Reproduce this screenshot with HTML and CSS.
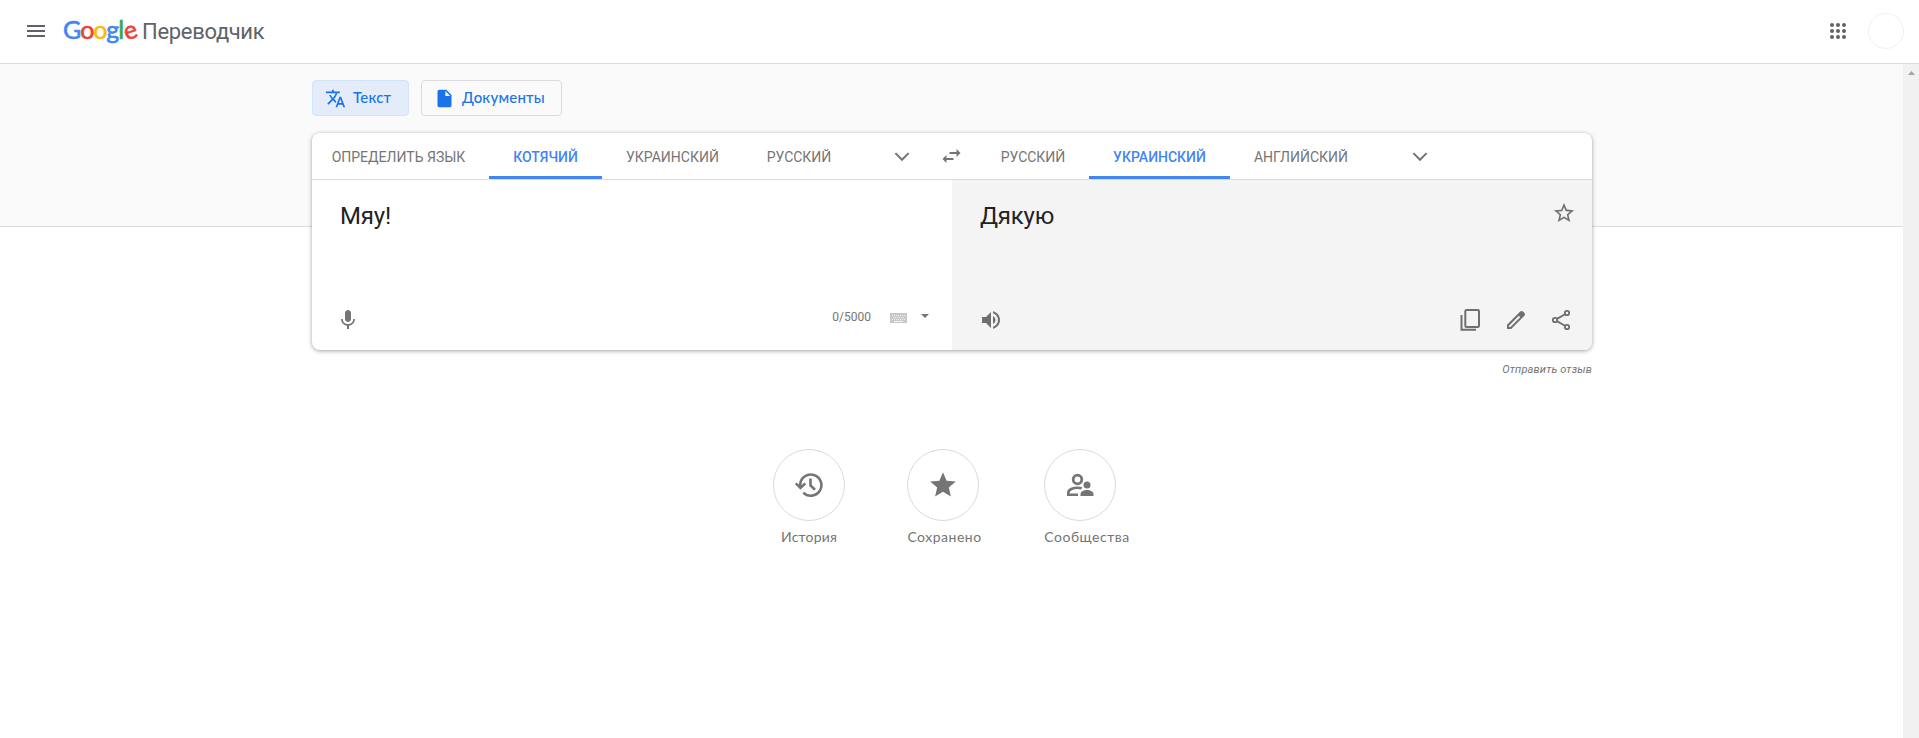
FILE: index.html
```html
<!DOCTYPE html>
<html lang="ru">
<head>
<meta charset="utf-8">
<title>Google Переводчик</title>
<link rel="stylesheet" href="styles.css">
</head>
<body>
<header class="header">
  <svg class="menu" viewBox="0 0 24 24"><path d="M3 18h18v-2H3v2zm0-5h18v-2H3v2zm0-7v2h18V6H3z"/></svg>
  <div class="brand"><span class="logo"><span class="blue">G</span><span class="red">o</span><span class="yellow">o</span><span class="blue">g</span><span class="green">l</span><span class="red tilt">e</span></span><span class="product">Переводчик</span></div>
  <svg class="apps" viewBox="0 0 16 16"><circle cx="2" cy="2" r="2"/><circle cx="8" cy="2" r="2"/><circle cx="14" cy="2" r="2"/><circle cx="2" cy="8" r="2"/><circle cx="8" cy="8" r="2"/><circle cx="14" cy="8" r="2"/><circle cx="2" cy="14" r="2"/><circle cx="8" cy="14" r="2"/><circle cx="14" cy="14" r="2"/></svg>
  <div class="avatar"></div>
</header>
<div class="viewport">
  <div class="page">
    <main class="content">
      <nav class="modes">
        <button class="mode mode-text active"><svg viewBox="0 0 24 24"><path d="M12.87 15.07l-2.54-2.51.03-.03c1.74-1.94 2.98-4.17 3.71-6.53H17V4h-7V2H8v2H1v1.99h11.17C11.5 7.92 10.44 9.75 9 11.35 8.07 10.32 7.3 9.19 6.69 8h-2c.73 1.63 1.73 3.17 2.98 4.56l-5.09 5.02L4 19l5-5 3.11 3.11.76-2.04zM18.5 10h-2L12 22h2l1.12-3h4.75L21 22h2l-4.5-12zm-2.62 7l1.62-4.33L19.12 17h-3.24z"/></svg><span class="t-text">Текст</span></button>
        <button class="mode mode-docs"><svg viewBox="0 0 24 24"><path d="M6 2c-1.1 0-1.99.9-1.99 2L4 20c0 1.1.89 2 1.99 2H18c1.1 0 2-.9 2-2V8l-6-6H6zm7 7V3.5L18.5 9H13z"/></svg><span class="t-docs">Документы</span></button>
      </nav>
      <section class="card">
        <div class="langs">
          <div class="source-langs">
            <span class="tab detect">ОПРЕДЕЛИТЬ ЯЗЫК</span><span class="tab cat selected">КОТЯЧИЙ</span><span class="tab ukr">УКРАИНСКИЙ</span><span class="tab rus">РУССКИЙ</span>
            <svg class="chevron" viewBox="0 0 24 24"><path d="M5.4 9.1 12 15.8l6.6-6.7"/></svg>
          </div>
          <svg class="swap" viewBox="0 0 24 24"><path d="M6.99 11L3 15l3.99 4v-3H14v-2H6.99v-3zM21 9l-3.99-4v3H10v2h7.01v3L21 9z"/></svg>
          <div class="target-langs">
            <span class="tab rus2">РУССКИЙ</span><span class="tab ukr selected">УКРАИНСКИЙ</span><span class="tab eng">АНГЛИЙСКИЙ</span>
            <svg class="chevron" viewBox="0 0 24 24"><path d="M5.4 9.1 12 15.8l6.6-6.7"/></svg>
          </div>
        </div>
        <div class="panes">
          <div class="pane source">
            <div class="row"><p class="phrase meow">Мяу!</p></div>
            <div class="tools">
              <svg class="icon" viewBox="0 0 24 24"><path d="M12 14c1.66 0 2.99-1.34 2.99-3L15 5c0-1.66-1.34-3-3-3S9 3.34 9 5v6c0 1.66 1.34 3 3 3zm5.3-3c0 3-2.54 5.1-5.3 5.1S6.7 14 6.7 11H5c0 3.41 2.72 6.23 6 6.72V21h2v-3.28c3.28-.48 6-3.3 6-6.72h-1.7z"/></svg>
              <span class="count">0/5000</span>
              <svg class="keyboard" viewBox="0 0 17 10"><path fill="#c8c8c8" d="M0 0h17v10H0z"/><path stroke="#fff" stroke-opacity=".75" stroke-dasharray="1 1" d="M2 2.5h14M3 4.5h12M2 6.5h14"/><path stroke="#fff" stroke-opacity=".8" d="M4 8.500h9"/></svg>
              <svg class="caret" viewBox="0 0 8 4"><path d="M0 0h8L4 4z"/></svg>
            </div>
          </div>
          <div class="pane target">
            <div class="row"><p class="phrase thanks">Дякую</p>
              <svg class="icon star" viewBox="0 0 24 24"><path d="M22 9.24l-7.19-.62L12 2 9.19 8.63 2 9.24l5.46 4.73L5.82 21 12 17.27 18.18 21l-1.63-7.03L22 9.24zM12 15.4l-3.76 2.27 1-4.28-3.32-2.88 4.38-.38L12 6.1l1.71 4.04 4.38.38-3.32 2.88 1 4.28L12 15.4z"/></svg></div>
            <div class="tools">
              <svg class="icon speaker" viewBox="0 0 24 24"><path d="M3 9v6h4l5 5V4L7 9H3zm13.5 3c0-1.77-1.02-3.29-2.5-4.03v8.05c1.48-.73 2.5-2.25 2.5-4.02zM14 3.23v2.06c2.89.86 5 3.54 5 6.71s-2.11 5.85-5 6.71v2.06c4.01-.91 7-4.49 7-8.77s-2.99-7.86-7-8.77z"/></svg>
              <svg class="icon" viewBox="0 0 24 24"><path fill="none" stroke="#6f6f6f" stroke-width="2" d="M7.500 2h11.300q1.200 0 1.200 1.200v14.600q0 1.200-1.200 1.200H7.500q-1.200 0-1.200-1.200V3.200Q6.300 2 7.500 2zM2.500 7v14.800H17" /></svg>
              <svg class="icon" viewBox="0 0 24 24"><path d="M20.410 4.940l-1.350-1.350c-.780-.780-2.050-.780-2.830 0L3 16.820V21h4.180L20.410 7.770c.790-.780.790-2.050 0-2.830zM6.410 19.060L5 19v-1.360l9.820-9.820 1.410 1.410-9.820 9.830z"/></svg>
              <svg class="icon" viewBox="0 0 24 24"><g fill="none" stroke="#6f6f6f" stroke-width="1.800"><circle cx="18" cy="5" r="2.200"/><circle cx="6" cy="12" r="2.200"/><circle cx="18" cy="19" r="2.200"/><path d="m8 10.900 8-4.700M8 13.100l8 4.700"/></g></svg>
            </div>
          </div>
        </div>
      </section>
      <div class="feedback"><span>Отправить отзыв</span></div>
      <div class="shortcuts">
        <div class="shortcut"><div class="disc"><svg viewBox="0 0 28 28"><path fill="none" stroke="#757575" stroke-width="2.600" d="M5.200 15V13.800A10.600 10.600 0 1 1 8.300 21.600M.8 12.300l4.700 4.700 4.700-4.700M15.500 7.500v7l4.500 4.200"/></svg></div><span class="l1">История</span></div>
        <div class="shortcut saved"><div class="disc"><svg viewBox="0 0 24 24"><path d="M12 17.270L18.180 21l-1.640-7.030L22 9.240l-7.190-.61L12 2 9.190 8.630 2 9.240l5.460 4.730L5.820 21z" transform="translate(-1.200 -1.150) scale(1.100)"/></svg></div><span class="l2">Сохранено</span></div>
        <div class="shortcut community"><div class="disc"><svg viewBox="0 0 28 28"><circle cx="11.500" cy="8.500" r="4.300" fill="none" stroke="#757575" stroke-width="2.800"/><path d="M12 23.700H2.300v-2c0-3.300 5-5 9.200-5 1.500 0 3 .2 4.200.6" fill="none" stroke="#757575" stroke-width="2.600"/><circle cx="21" cy="14" r="3.500"/><path d="M14.500 25v-2c0-2.800 4-4 6.500-4s6.500 1.200 6.500 4v2z"/></svg></div><span class="l3">Сообщества</span></div>
      </div>
    </main>
  </div>
  <div class="scrollbar"><svg viewBox="0 0 7 4"><path d="M0 4h7L3.500 0z"/></svg></div>
</div>
</body>
</html>
```
FILE: styles.css
```css
* { box-sizing: border-box; }
body { margin: 0; height: 738px; overflow: hidden; background: #fff; font-family: Roboto, "Noto Sans", sans-serif; }
svg { display: block; flex: none; }
.header { height: 64px; display: flex; align-items: center; border-bottom: 1px solid #dadce0; padding: 0 15px 1px 24px; }
.menu { width: 24px; height: 24px; fill: #5f6368; }
.brand { display: flex; align-items: baseline; margin: 0 0 2px 15px; }
.logo { width: 79px; font: 400 25px/40px Lato, sans-serif; letter-spacing: -1.1px; white-space: nowrap; }
.logo span { display: inline-block; -webkit-text-stroke: 0.6px currentColor; }
.blue { color: #4285f4; }
.red { color: #ea4335; }
.yellow { color: #fbbc05; }
.green { color: #34a853; }
.tilt { transform: rotate(-18deg); }
.product { font-size: 22px; line-height: 40px; letter-spacing: -.3px; color: #5f6368; }
.apps { width: 16px; height: 16px; margin-left: auto; margin-right: 22px; fill: #5f6368; }
.avatar { width: 36px; height: 36px; border: 1px solid #f1f1f1; border-radius: 50%; }
.viewport { display: flex; height: 674px; }
.page { flex: 1; background: linear-gradient(#fafafa 162px, #dadce0 162px, #dadce0 163px, #fff 163px); }
.scrollbar { width: 16px; background: #f1f1f1; display: flex; justify-content: center; padding-top: 7px; }
.scrollbar svg { width: 7px; height: 4px; fill: #a3a3a3; }
.content { width: 1280px; margin-left: 312px; padding-top: 16px; }
.modes { display: flex; gap: 12px; }
.mode { height: 36px; display: flex; align-items: center; border: 1px solid #dadce0; border-radius: 4px; background: transparent; color: #1a73e8; font: 500 15px/20px Lato, sans-serif; white-space: nowrap; padding: 0 0 0 12px; }
.mode svg { width: 21px; height: 21px; fill: #1a73e8; }
.mode span { margin: 0 0 2px 7px; letter-spacing: .2px; }
.mode-text { width: 97px; }
.mode-docs { width: 141px; }
.active { background: #e4ebf9; border-color: #d2e3fc; }
.card { margin-top: 17px; height: 217px; border-radius: 8px; background: #fff; overflow: hidden; box-shadow: 0 1px 4px rgba(0,0,0,.37); }
.langs { height: 47px; display: flex; align-items: stretch; border-bottom: 1px solid #dadce0; }
.source-langs { width: 627px; display: flex; align-items: center; }
.target-langs { flex: 1; display: flex; align-items: center; }
.tab { height: 46px; font-size: 14px; line-height: 48px; color: #757575; font-weight: 400; white-space: nowrap; text-align: center; border-bottom: 3px solid transparent; }
.detect { width: 177px; padding-right: 4px; }
.cat { width: 113px; }
.ukr { width: 141px; }
.rus { width: 113px; padding-right: 1px; }
.rus2 { width: 113px; padding-left: 1px; }
.eng { width: 141px; padding-left: 1px; }
.selected { color: #4285f4; font-weight: 500; border-color: #4285f4; }
.chevron { width: 24px; height: 24px; fill: none; stroke: #757575; stroke-width: 2; margin-left: 34px; }
.target-langs .chevron { margin-left: 37px; }
.swap { width: 25px; height: 24px; fill: #757575; align-self: center; margin-right: 12px; }
.panes { display: flex; height: 170px; }
.pane { width: 640px; display: flex; flex-direction: column; justify-content: space-between; padding: 20px 16px 18px 28px; }
.target { background: #f4f4f4; }
.row { display: flex; justify-content: space-between; }
.star { margin-top: 1px; }
.phrase { margin: 0; font-size: 24px; line-height: 32px; color: #222; }
.meow, .thanks { letter-spacing: -.2px; }
.tools { display: flex; height: 24px; align-items: center; }
.icon { width: 24px; height: 24px; fill: #757575; margin-left: 21px; }
.target .icon { fill: #6f6f6f; }
.source .icon { margin-left: -4px; }
.tools .speaker { margin: 0 auto 0 -1px; }
.target .tools { padding-right: 3px; }
.count { margin-left: auto; font-size: 12px; line-height: 16px; color: #757575; margin-bottom: 6px; }
.keyboard { width: 17px; height: 10px; margin: 0 14px 4px 19px; }
.caret { width: 8px; height: 4px; fill: #757575; margin: 0 7px 8px 0; }
.feedback { display: flex; justify-content: flex-end; margin-top: 12px; font-size: 11px; line-height: 16px; letter-spacing: .16px; font-style: italic; color: #757575; }
.shortcuts { display: flex; gap: 62px; margin: 71px 0 0 461px; }
.shortcut { width: 72px; }
.saved { width: 75px; }
.community { width: 86px; }
.disc { width: 72px; height: 72px; border: 1px solid #dadada; border-radius: 50%; display: grid; place-items: center; }
.disc svg { width: 28px; height: 28px; fill: #757575; }
.shortcut span { display: block; margin-top: 6px; font: 400 14px/20px Lato, sans-serif; letter-spacing: .5px; color: #757575; text-align: center; white-space: nowrap; }
.shortcut .l1 { letter-spacing: .2px; }
```
